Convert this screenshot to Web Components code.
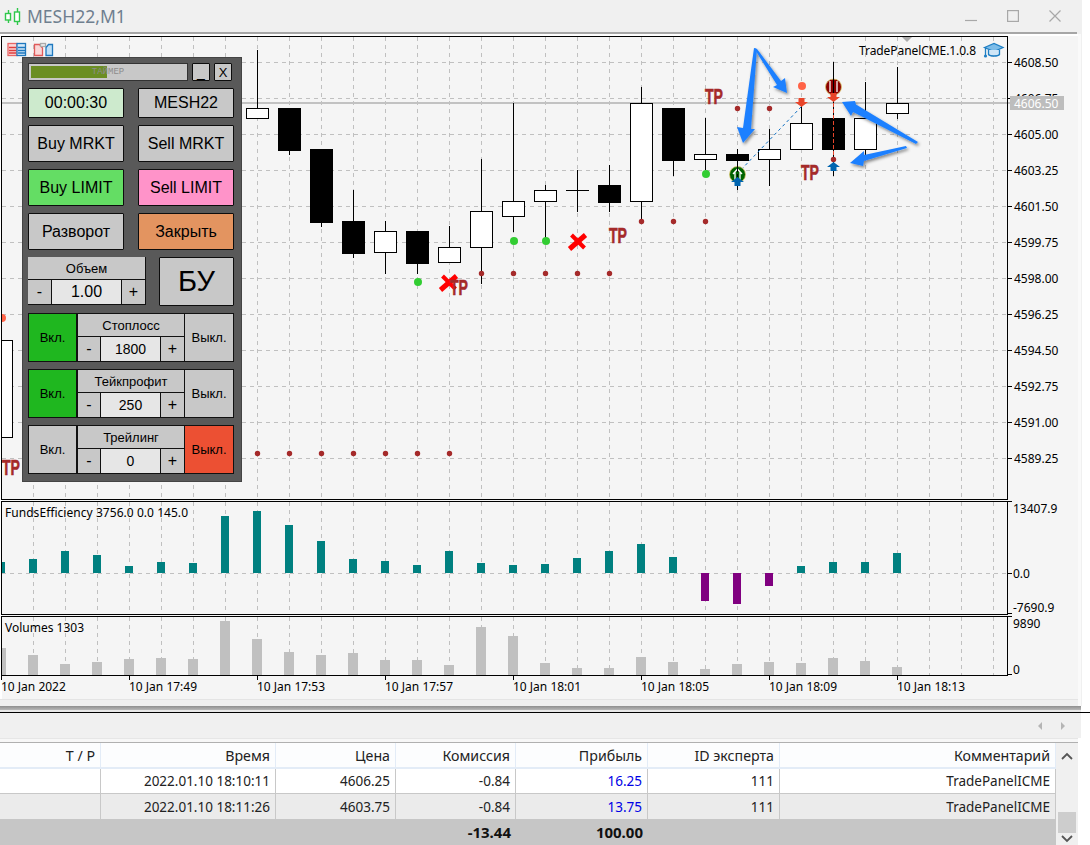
<!DOCTYPE html>
<html lang="ru">
<head>
<meta charset="utf-8">
<title>MESH22,M1</title>
<style>
  html, body { margin: 0; padding: 0; background: #fff; }
  body { width: 1090px; height: 845px; overflow: hidden; position: relative; }
  trade-panel { position: absolute; left: 22px; top: 57px; }
</style>
</head>
<body>
<mt-titlebar>MESH22,M1</mt-titlebar>
<mt-chart></mt-chart>
<mt-toolbar></mt-toolbar>
<trade-table></trade-table>

<trade-panel>
  <panel-timer slot="head"></panel-timer>
  <panel-btn slot="head" style="--fs:14px">_</panel-btn>
  <panel-btn slot="head" style="--fs:13px">X</panel-btn>

  <panel-btn style="--bg:#cdeacd">00:00:30</panel-btn>
  <panel-btn>MESH22</panel-btn>
  <panel-btn>Buy MRKT</panel-btn>
  <panel-btn>Sell MRKT</panel-btn>
  <panel-btn style="--bg:#64dd64">Buy LIMIT</panel-btn>
  <panel-btn style="--bg:#ff93c9">Sell LIMIT</panel-btn>
  <panel-btn>Разворот</panel-btn>
  <panel-btn style="--bg:#e39460">Закрыть</panel-btn>

  <panel-volume slot="volume"></panel-volume>
  <panel-btn slot="volume" style="--fs:29px">БУ</panel-btn>

  <panel-toggle slot="toggles" label="Стоплосс" value="1800" active="on"></panel-toggle>
  <panel-toggle slot="toggles" label="Тейкпрофит" value="250" active="on"></panel-toggle>
  <panel-toggle slot="toggles" label="Трейлинг" value="0" active="off"></panel-toggle>
</trade-panel>

<script>
const SANS = '"Liberation Sans", Arial, sans-serif';
const CHART_FONT = '"Noto Sans", "DejaVu Sans", sans-serif';

class MtTitlebar extends HTMLElement {
  constructor() {
    super();
    this.attachShadow({ mode: 'open' });
    this.shadowRoot.innerHTML = `
      <style>
        :host { display: block; width: 1082px; height: 34px; background: #f0f0f0; box-sizing: border-box; }
        .bar { display: flex; align-items: center; height: 32px; border-bottom: 2px solid #a6a6a6; width: 1077px; box-sizing: content-box; }
        .logo { width: 18px; height: 20px; margin-left: 3px; flex: none; }
        .title { margin-left: 6px; font: 17.5px "Noto Sans", sans-serif; color: #6f7f8f; flex: 1; }
        .btns { display: flex; align-items: center; margin-right: 16px; }
        .btns svg { width: 12px; height: 12px; margin-left: 30px; display: block; }
      </style>
      <div class="bar">
        <svg class="logo" viewBox="0 0 18 20" fill="#fff" stroke="#2fc84a" stroke-width="1.4">
          <path d="M5.5 4v13M14.5 2v17"/>
          <rect x="2.5" y="7.5" width="5" height="6.5"/>
          <rect x="11.5" y="6" width="5" height="9.5"/>
        </svg>
        <span class="title"><slot></slot></span>
        <div class="btns">
          <svg viewBox="0 0 12 12" stroke="#a8a8a8" fill="none" stroke-width="1.2"><path d="M0 10.5h12"/></svg>
          <svg viewBox="0 0 12 12" stroke="#a8a8a8" fill="none" stroke-width="1.2"><rect x=".6" y=".6" width="10.8" height="10.8"/></svg>
          <svg viewBox="0 0 12 12" stroke="#a8a8a8" fill="none" stroke-width="1.2"><path d="M.5.5l11 11M11.500.5l-11 11"/></svg>
        </div>
      </div>`;
  }
}

// candle centres are x = 1 + 32 * n, [body top, body bottom, wick top, wick bottom, filled]
const CANDLES = [
  [1, 340, 437, 340, 437, 0],
  [257, 108, 118, 50, 118, 0], [289, 108, 150, 108, 155, 1], [321, 149, 222, 149, 227, 1],
  [353, 221, 253, 190, 258, 1], [385, 231, 252, 221, 274, 0], [417, 231, 263, 231, 274, 1],
  [449, 247, 262, 226, 262, 0], [481, 211, 247, 159, 284, 0], [513, 201, 216, 103, 232, 0],
  [545, 190, 201, 185, 240, 0], [577, 190, 190, 170, 212, 1], [609, 185, 202, 165, 212, 1],
  [641, 103, 201, 87, 221, 0], [673, 108, 160, 108, 176, 1], [705, 154, 159, 118, 170, 0],
  [737, 154, 160, 149, 190, 1], [769, 149, 159, 129, 186, 0], [801, 123, 149, 105, 149, 0],
  [833, 118, 149, 62, 176, 1], [865, 118, 149, 82, 156, 0], [897, 103, 113, 67, 119, 0]
];
const PRICES = ['4608.50','4606.75','4605.00','4603.25','4601.50','4599.75','4598.00','4596.25','4594.50','4592.75','4591.00','4589.25'];
// top of the bar for x = 1 + 32 * n, baseline y = 573
const FUNDS = [562,559,551,555,566,562,563,516,511,525,541,559,561,565,551,563,565,564,558,551,544,557,601,604,586,566,562,562,553];
const VOLS = [648,655,664,662,659,658,659,621,639,652,655,653,660,660,665,627,636,663,668,668,657,662,669,664,662,663,658,661,667];
const TP_MARKS = [[705,104],[801,180],[609,243],[450,295],[2,475]];

function upArrow(x, top, fill) {
  return `<polygon fill="${fill}" points="${x},${top} ${x+6.5},${top+5} ${x+3},${top+5} ${x+3},${top+9} ${x-3},${top+9} ${x-3},${top+5} ${x-6.5},${top+5}"/>`;
}
function downArrow(x, top, fill) {
  return `<polygon fill="${fill}" points="${x-3},${top} ${x+3},${top} ${x+3},${top+4} ${x+6.5},${top+4} ${x},${top+9} ${x-6.5},${top+4} ${x-3},${top+4}"/>`;
}
function cross(x, y) {
  return `<path d="M${x-6} ${y-7}L${x+7} ${y+6}" stroke="#f00" stroke-width="4"/>
          <path d="M${x+8} ${y-7}L${x-8} ${y+7}" stroke="#f00" stroke-width="5"/>`;
}

class MtChart extends HTMLElement {
  constructor() {
    super();
    this.attachShadow({ mode: 'open' });
  }

  connectedCallback() {
    this.shadowRoot.innerHTML = `
      <style>
        :host { display: block; width: 1082px; height: 672px; background: #f0f0f0; }
        svg { display: block; }
        text { font-family: ${CHART_FONT}; font-size: 12px; fill: #000; }
        .grid { stroke: #c0c0c0; stroke-dasharray: 4 4; stroke-width: 1; fill: none; }
        .tp { font-family: "Liberation Sans Narrow", "Liberation Sans", sans-serif; font-size: 22px; font-weight: 700; fill: #a52a2a; stroke: #a52a2a; stroke-width: .6; }
      </style>
      <svg width="1082" height="672" viewBox="0 34 1082 672">${this.draw()}</svg>`;
  }

  draw() {
    let s = `<defs>
      <clipPath id="pane"><rect x="2" y="37" width="1005" height="640"/></clipPath>
      <filter id="soft" x="-30%" y="-30%" width="160%" height="160%"><feDropShadow dx="1.5" dy="2" stdDeviation="1.8" flood-color="#000" flood-opacity=".45"/></filter>
    </defs>`;
    // backgrounds
    s += `<rect x="0" y="34" width="1078" height="665" fill="#fff"/>
          <rect x="2" y="36" width="1076" height="663" fill="#f5f5f5"/>
          <rect x="0" y="699" width="1078" height="1" fill="#e4e4e4"/>
          <rect x="1078" y="34" width="3" height="672" fill="#fafafa"/>`;
    // grid
    for (let x = 33; x <= 993; x += 32) {
      s += `<path class="grid" d="M${x+.5} 37V499M${x+.5} 502V614M${x+.5} 617V675"/>`;
    }
    PRICES.forEach((p, i) => { s += `<path class="grid" d="M2 ${62+36*i+.5}H1007"/>`; });
    s += `<path class="grid" d="M2 573.500H1007"/>`;
    s += `<rect x="2" y="102" width="1008" height="2" fill="#c2c2c2"/>`;

    // indicators under the frame
    s += `<g clip-path="url(#pane)">`;
    FUNDS.forEach((y, i) => {
      const x = 1 + 32 * i;
      s += y <= 573
        ? `<rect x="${x-4}" y="${y}" width="8" height="${573-y}" fill="#008080"/>`
        : `<rect x="${x-4}" y="573" width="8" height="${y-573}" fill="#800080"/>`;
    });
    VOLS.forEach((y, i) => {
      s += `<rect x="${1+32*i-5}" y="${y}" width="10" height="${675-y}" fill="#c0c0c0"/>`;
    });
    // candles
    CANDLES.forEach(([x, top, bot, wt, wb, filled]) => {
      s += `<path d="M${x+.5} ${wt}V${wb}" stroke="#000"/>`;
      s += top === bot
        ? `<path d="M${x-11} ${top+.5}H${x+12}" stroke="#000"/>`
        : `<rect x="${x-10.5}" y="${top+.5}" width="22" height="${bot-top}" fill="${filled ? '#000' : '#fff'}" stroke="#000"/>`;
    });
    s += `</g>`;

    // trade lines
    s += `<path d="M737 174L801 107" stroke="#0a6cc0" stroke-dasharray="3 3" fill="none"/>`;
    s += `<path d="M833.500 103V159" stroke="#e8452a" stroke-dasharray="4 2" fill="none"/>`;

    // markers: small brown dots
    const dots = [[257,453],[289,453],[321,453],[353,453],[385,453],[417,453],[449,453],
      [481,273],[513,273],[545,273],[577,273],[609,273],[641,221],[673,221],[705,221],[737,108],[769,108],[833,159]];
    dots.forEach(([x, y]) => { s += `<circle cx="${x+.5}" cy="${y+.5}" r="2.700" fill="#a52a2a"/>`; });
    [[418,282],[514,241],[546,241],[706,174]].forEach(([x, y]) => {
      s += `<circle cx="${x}" cy="${y}" r="4" fill="#32cd32"/>`;
    });
    s += `<circle cx="802" cy="86" r="4" fill="#ff6347"/><circle cx="2" cy="318" r="4" fill="#ff6347" clip-path="url(#pane)"/>`;

    // entry circles
    s += `<circle cx="737.500" cy="174.500" r="8" fill="#006400" stroke="#d9c66a" stroke-width=".8"/>
          <path d="M733 174l4.500-5 4.500 5M735 172v8M740 172v8" stroke="#fff" stroke-width="1.300" fill="none"/>
          <path d="M737.500 166V190" stroke="#000" stroke-dasharray="6 2"/>`;
    s += `<circle cx="833.500" cy="87" r="8" fill="#8b0000" stroke="#d9c66a" stroke-width=".8"/>
          <path d="M830 81V92M837 81V92" stroke="#fff" stroke-width="1.300"/>
          <path d="M833.500 78V96" stroke="#000"/>`;
    s += upArrow(737.5, 177, '#0065b0') + upArrow(833.5, 162, '#0065b0');
    s += downArrow(801.5, 98, '#e8452a') + downArrow(833.5, 93, '#e8452a');
    s += cross(577.5, 242) + cross(448.5, 283);
    TP_MARKS.forEach(([x, y]) => {
      s += `<text class="tp" x="${x}" y="${y}" textLength="18" lengthAdjust="spacingAndGlyphs">TP</text>`;
    });

    // hand drawn arrows on top of the picture
    s += `<g fill="#1e80ff" filter="url(#soft)">
      <polygon points="754,48 757,49 751,129 755,129 743,143 737,127 743,128"/>
      <polygon points="754,48 757,49 781,81 785,78 787,93 773,87 777,85"/>
      <polygon points="918,142 916,144 853,112 851,116 842,102 855,101 856,104.500"/>
      <polygon points="906,146 907,148 864,161 863,166 850,163 864,151 864,155"/>
    </g>`;
    s += `<polygon points="902,37 912,37 907,42" fill="#ababab"/>`;

    // frames
    s += `<g fill="none" stroke="#000">
      <rect x="1.500" y="36.500" width="1006" height="463"/>
      <rect x="1.500" y="501.500" width="1006" height="113"/>
      <rect x="1.500" y="616.500" width="1006" height="59"/>
    </g>`;

    // price axis
    PRICES.forEach((p, i) => {
      const y = 62 + 36 * i;
      s += `<path d="M1008 ${y+.5}h4" stroke="#000"/><text x="1014" y="${y+5}">${p}</text>`;
    });
    s += `<rect x="1010" y="96" width="54" height="14" fill="#bdbdbd"/><text x="1014" y="108" style="fill:#fff">4606.50</text>`;
    s += `<path d="M1008 501.500h4M1008 573.500h4M1008 613.500h4M1008 616.500h4M1008 674.500h4" stroke="#000"/>
          <text x="1013" y="513">13407.9</text>
          <text x="1013" y="578">0.0</text>
          <text x="1013" y="612">-7690.9</text>
          <text x="1013" y="628">9890</text>
          <text x="1013" y="674">0</text>`;
    // time axis
    ['10 Jan 2022','10 Jan 17:49','10 Jan 17:53','10 Jan 17:57','10 Jan 18:01','10 Jan 18:05','10 Jan 18:09','10 Jan 18:13'].forEach((t, i) => {
      const x = 1 + 128 * i;
      s += `<path d="M${x+.5} 676v4" stroke="#000"/><text x="${x}" y="691">${t}</text>`;
    });

    // chart labels and corner icons
    s += `<text x="859" y="55" textLength="117">TradePanelCME.1.0.8</text>`;
    s += `<text x="5" y="517" textLength="183">FundsEfficiency 3756.0 0.0 145.0</text>`;
    s += `<text x="5" y="632">Volumes 1303</text>`;
    s += `<g fill="none" stroke="#1f7fc4" stroke-width="1.300">
      <path d="M984.500 47.500L994 43.500L1003 47.500L994 51.500Z" fill="#7dbce8"/>
      <path d="M988.500 50v4.500c1.500 2 9.500 2 11 0V50" fill="#cfe6f7"/>
      <path d="M985.500 47.500V55"/>
    </g><circle cx="985.500" cy="56" r="1.600" fill="#1f7fc4"/>`;
    s += `<g stroke-width="1.300">
      <rect x="8" y="43.500" width="9" height="12" fill="#fbd7d7" stroke="#e86666"/>
      <path d="M9 47.500h7M9 50.500h7M9 53h7" stroke="#e03c3c"/>
      <rect x="17" y="43.500" width="8.500" height="12" fill="#d5e9f8" stroke="#1f78be"/>
      <path d="M18 47.500h7M18 50.500h7M18 53h7" stroke="#1f78be"/>
      <path d="M34.500 44.500h5l3 3.500v7.500h-8z" fill="#fbd7d7" stroke="#e05a5a"/>
      <rect x="40.500" y="43.500" width="5" height="3" fill="#eee" stroke="#aaa"/>
      <path d="M52.500 44.500h-4l-2.500 3v8h6.500z" fill="#bfe0f7" stroke="#1f78be"/>
    </g>`;
    return s;
  }
}

class PanelBtn extends HTMLElement {
  constructor() {
    super();
    this.attachShadow({ mode: 'open' });
    this.shadowRoot.innerHTML = `
      <style>
        :host {
          display: flex; align-items: center; justify-content: center;
          box-sizing: border-box; border: 1px solid #0d0d0d; border-radius: 1px;
          background: var(--bg, #c8c8c8); color: #000;
          font: var(--fs, 16px) ${SANS};
          min-width: 0;
        }
      </style><slot></slot>`;
  }
}

class PanelTimer extends HTMLElement {
  constructor() {
    super();
    this.attachShadow({ mode: 'open' });
    this.shadowRoot.innerHTML = `
      <style>
        :host {
          display: flex; align-items: center; justify-content: center;
          box-sizing: border-box; border: 1px solid #333;
          background: linear-gradient(#6b8e23, #6b8e23) no-repeat 2px 2px / 76px 12px #c8c8c8;
          color: #8c8c8c; font: 9px "Liberation Mono", monospace;
        }
      </style>ТАЙМЕР`;
  }
}

class PanelVolume extends HTMLElement {
  constructor() {
    super();
    this.attachShadow({ mode: 'open' });
    this.shadowRoot.innerHTML = `
      <style>
        :host { display: grid; grid-template-columns: 24px 70px 24px; grid-template-rows: 23px 25px; font: 16px ${SANS}; color: #000; }
        .c { display: flex; align-items: center; justify-content: center; box-sizing: border-box; background: #c8c8c8; border-right: 1px solid #111; border-bottom: 1px solid #111; }
        .label { grid-column: 1 / 4; font-size: 13px; }
        .val { background: #e6e6e6; }
      </style>
      <div class="c label">Объем</div>
      <div class="c">-</div><div class="c val">1.00</div><div class="c">+</div>`;
  }
}

class PanelToggle extends HTMLElement {
  constructor() {
    super();
    this.attachShadow({ mode: 'open' });
  }

  connectedCallback() {
    const label = this.getAttribute('label');
    const value = this.getAttribute('value');
    const active = this.getAttribute('active');
    this.shadowRoot.innerHTML = `
      <style>
        :host { display: grid; grid-template-columns: 49px 107px 50px; height: 49px; font: 13px ${SANS}; color: #000; background: #111; }
        .c { display: flex; align-items: center; justify-content: center; box-sizing: border-box; background: #c8c8c8; }
        .mid { display: grid; grid-template-columns: 23px 60px 24px; grid-template-rows: 24px 25px; }
        .mid .c { border-left: 1px solid #111; border-bottom: 1px solid #111; }
        .mid .label { grid-column: 1 / 4; border-top: 1px solid #111; }
        .mid .val { background: #e6e6e6; font-size: 14px; }
        .mid .op { font-size: 16px; }
        .side { border: 1px solid #111; }
        .green { background: #1fb71f; }
        .red { background: #ec5033; }
      </style>
      <div class="c side ${active === 'on' ? 'green' : ''}">Вкл.</div>
      <div class="mid">
        <div class="c label">${label}</div>
        <div class="c op">-</div><div class="c val">${value}</div><div class="c op">+</div>
      </div>
      <div class="c side ${active === 'off' ? 'red' : ''}">Выкл.</div>`;
  }
}

class TradePanel extends HTMLElement {
  constructor() {
    super();
    this.attachShadow({ mode: 'open' });
    this.shadowRoot.innerHTML = `
      <style>
        :host { display: block; width: 220px; height: 425px; box-sizing: border-box; background: #595959; border: 1px solid #444; padding: 5px 7px 0 5px; }
        .head { display: grid; grid-template-columns: 160px 18px 18px; column-gap: 4px; height: 18px; margin-bottom: 7px; }
        .main { display: grid; grid-template-columns: 96px 96px; column-gap: 14px; grid-template-rows: 30px 37px 37px 37px; row-gap: 7px; margin-bottom: 7px; }
        .vol { display: grid; grid-template-columns: 118px 75px; column-gap: 13px; height: 49px; margin-bottom: 7px; }
        .tog { display: grid; row-gap: 7px; }
        ::slotted(*) { min-width: 0; }
      </style>
      <div class="head"><slot name="head"></slot></div>
      <div class="main"><slot></slot></div>
      <div class="vol"><slot name="volume"></slot></div>
      <div class="tog"><slot name="toggles"></slot></div>`;
  }
}

class MtToolbar extends HTMLElement {
  constructor() {
    super();
    this.attachShadow({ mode: 'open' });
    this.shadowRoot.innerHTML = `
      <style>
        :host { display: block; width: 1090px; height: 32px; }
        .band { height: 4px; width: 1081px; background: linear-gradient(#8f8f8f, #b8b8b8); }
        .gap { height: 2px; width: 1081px; background: #e8e8e8; }
        .rule { height: 1px; background: #000; }
        .bar { display: flex; justify-content: flex-end; align-items: center; gap: 19px; height: 25px; width: 1081px; padding-right: 16px; box-sizing: border-box; background: #f0f0f0; }
        .arrow { width: 0; height: 0; border-top: 4px solid transparent; border-bottom: 4px solid transparent; }
        .l { border-right: 4px solid #b5b5b5; }
        .r { border-left: 4px solid #b5b5b5; }
      </style>
      <div class="band"></div><div class="gap"></div><div class="rule"></div>
      <div class="bar"><span class="arrow l"></span><span class="arrow r"></span></div>`;
  }
}

const COLS = [
  ['T / P', '', ''],
  ['Время', '2022.01.10 18:10:11', '2022.01.10 18:11:26'],
  ['Цена', '4606.25', '4603.75'],
  ['Комиссия', '-0.84', '-0.84'],
  ['Прибыль', '16.25', '13.75'],
  ['ID эксперта', '111', '111'],
  ['Комментарий', 'TradePanelICME', 'TradePanelICME']
];

class TradeTable extends HTMLElement {
  constructor() {
    super();
    this.attachShadow({ mode: 'open' });
  }

  connectedCallback() {
    const row = (i, cls) => COLS.map((c, n) =>
      `<div class="c ${cls} ${n === 4 && i > 0 ? 'profit' : ''}">${c[i]}</div>`).join('');
    const totals = ['', '', '', '-13.44', '100.00', '', ''];
    this.shadowRoot.innerHTML = `
      <style>
        :host { display: block; width: 1090px; height: 107px; box-sizing: border-box; font: 13.5px "Noto Sans", sans-serif; color: #222; }
        .strip { height: 4px; width: 1078px; background: #f7f7f7; border-top: 1px solid #e6e6e6; box-sizing: border-box; }
        .line { height: 1px; width: 1078px; background: #b0b0b0; }
        .wrap { display: grid; grid-template-columns: 1056px 22px; }
        .grid { display: grid; grid-template-columns: 101px 175px 120px 120px 132px 132px 276px; grid-template-rows: 26px 25px 25px 26px; }
        .c { display: flex; align-items: center; justify-content: flex-end; padding-right: 5px; box-sizing: border-box; white-space: nowrap; }
        .h { background: #fcfdfe; border-right: 1px solid #e3ecf7; border-bottom: 2px solid #e3ecf7; font-size: 14.2px; }
        .a { background: #fff; border-right: 1px solid #c8c8c8; border-bottom: 1px solid #c8c8c8; }
        .b { background: #ebebeb; border-right: 1px solid #c8c8c8; }
        .t { background: #c6c6c6; font-weight: 700; font-size: 15px; color: #111; }
        .profit { color: #0000e6; }
        .bar { display: grid; grid-template-rows: 26px 1fr 21px 12px; justify-items: center; align-items: center; background: #f0f0f0; }
        .bar svg { display: block; }
        .thumb { width: 18px; height: 21px; background: #cdcdcd; }
      </style>
      <div class="strip"></div>
      <div class="line"></div>
      <div class="wrap">
        <div class="grid">
          ${row(0, 'h')}${row(1, 'a')}${row(2, 'b')}
          ${totals.map(t => `<div class="c t">${t}</div>`).join('')}
        </div>
        <div class="bar">
          <svg width="12" height="8" viewBox="0 0 12 8" fill="none" stroke="#555" stroke-width="1.800"><path d="M1 7l5-5 5 5"/></svg>
          <span></span>
          <div class="thumb"></div>
          <svg width="12" height="8" viewBox="0 0 12 8" fill="none" stroke="#555" stroke-width="1.800"><path d="M1 1l5 5 5-5"/></svg>
        </div>
      </div>`;
  }
}

customElements.define('mt-titlebar', MtTitlebar);
customElements.define('mt-chart', MtChart);
customElements.define('panel-btn', PanelBtn);
customElements.define('panel-timer', PanelTimer);
customElements.define('panel-volume', PanelVolume);
customElements.define('panel-toggle', PanelToggle);
customElements.define('trade-panel', TradePanel);
customElements.define('mt-toolbar', MtToolbar);
customElements.define('trade-table', TradeTable);
</script>
</body>
</html>
